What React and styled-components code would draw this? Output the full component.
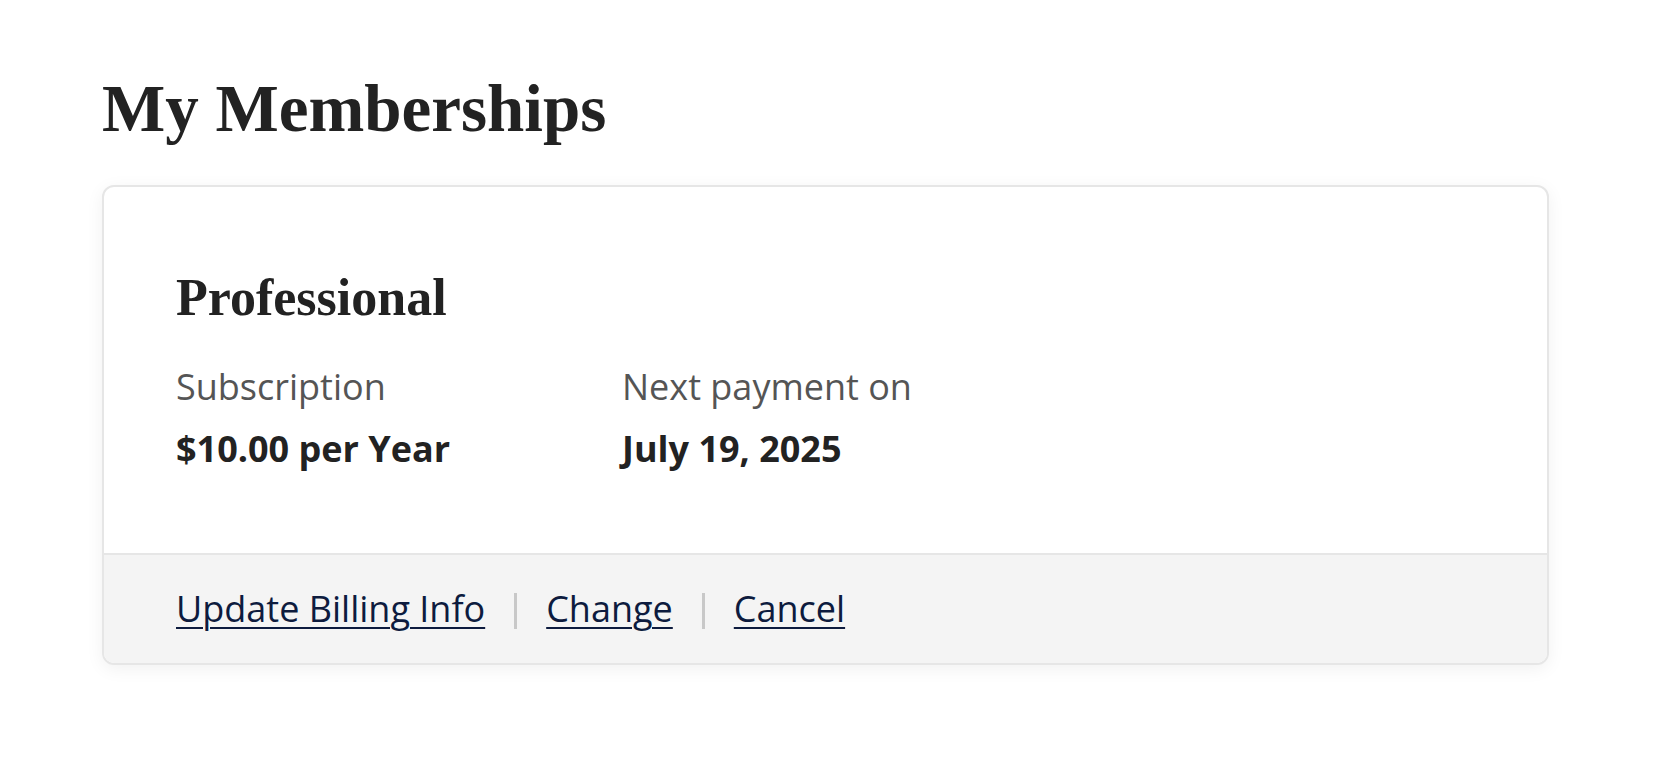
import React from "react";
import styled, { createGlobalStyle } from "styled-components";

const GlobalStyle = createGlobalStyle`
	body {
		margin: 0;
		background: #fff;
		font-family: "Open Sans", "Noto Sans", sans-serif;
		color: #222;
	}
`;

// Styled components
const Page = styled.div`
	padding: 68px 105px 60px 102px;
`;

const Title = styled.h1`
	margin: 0 0 37px;
	font-family: "Liberation Serif", "Times New Roman", serif;
	font-weight: 700;
	font-size: 67px;
	line-height: 1.2;
	color: #222;
`;

const Card = styled.div`
	border: 2px solid #e6e6e6;
	border-radius: 12px;
	background: #fff;
	box-shadow: 0 4px 18px rgba(0, 0, 0, 0.06);
	overflow: hidden;
`;

const CardBody = styled.div`
	padding: 80px 72px 78px;
`;

const PlanName = styled.h2`
	margin: 0 0 31px;
	font-family: "Liberation Serif", "Times New Roman", serif;
	font-weight: 700;
	font-size: 52px;
	line-height: 62px;
	color: #222;
`;

const Details = styled.div`
	display: grid;
	grid-template-columns: 446px auto;
	justify-content: start;
`;

const Detail = styled.div`
	display: flex;
	flex-direction: column;
	gap: 9px;
`;

const Label = styled.span`
	font-size: 36px;
	line-height: 53px;
	color: #555;
`;

const Value = styled.span`
	font-size: 36px;
	line-height: 53px;
	font-weight: 700;
	color: #222;
`;

const CardFooter = styled.div`
	display: flex;
	align-items: center;
	gap: 29px;
	padding: 27px 72px 28px;
	background: #f4f4f4;
	border-top: 2px solid #e6e6e6;
`;

const FooterLink = styled.a`
	font-size: 36px;
	line-height: 53px;
	color: #0d1b3e;
	text-decoration: underline;
	text-decoration-thickness: 2px;
	text-underline-offset: 5px;
	cursor: pointer;
`;

const Separator = styled.span`
	width: 3px;
	height: 36px;
	margin-top: 4px;
	background: #c8c8c8;
`;

const links = ["Update Billing Info", "Change", "Cancel"];

const App = () => {
	return (
		<>
			<GlobalStyle />
			<Page>
				<Title>My Memberships</Title>
				<Card>
					<CardBody>
						<PlanName>Professional</PlanName>
						<Details>
							<Detail>
								<Label>Subscription</Label>
								<Value>$10.00 per Year</Value>
							</Detail>
							<Detail>
								<Label>Next payment on</Label>
								<Value>July 19, 2025</Value>
							</Detail>
						</Details>
					</CardBody>
					<CardFooter>
						{links.map((link, i) => (
							<React.Fragment key={link}>
								{i > 0 && <Separator />}
								<FooterLink href="#">{link}</FooterLink>
							</React.Fragment>
						))}
					</CardFooter>
				</Card>
			</Page>
		</>
	);
};

export default App;
